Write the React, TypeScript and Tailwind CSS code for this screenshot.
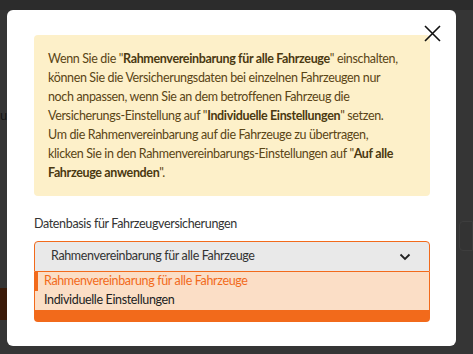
const options = ["Rahmenvereinbarung für alle Fahrzeuge", "Individuelle Einstellungen"];

function CloseIcon() {
  return (
    <svg width="17" height="17" viewBox="0 0 17 17" fill="none">
      <path d="M1 1L16 16M16 1L1 16" stroke="#111" strokeWidth="1.6" />
    </svg>
  );
}

function Chevron() {
  return (
    <svg width="12" height="8" viewBox="0 0 12 8" fill="none">
      <path d="M1.5 1.5L6 6L10.5 1.5" stroke="#222" strokeWidth="1.8" />
    </svg>
  );
}

const B = ({ children }: { children: React.ReactNode }) => (
  <b className="font-bold text-[#4a3810]">{children}</b>
);

export default function App() {
  return (
    <div
      className="relative h-[354px] w-[473px] overflow-hidden bg-[#353535] tracking-[-0.35px]"
      style={{ fontFamily: "Lato, 'Open Sans', sans-serif" }}
    >
      {/* dimmed page behind the dialog */}
      <div className="h-[10px] bg-[#2c2c2c]" />
      <div className="mt-[96px] flex h-[20px] items-center text-[13px] text-[#151515]">
        <span>ue</span>
      </div>
      <div className="mt-[95px] ml-[459px] h-[30px] w-[14px] rounded-l border border-[#3d3d3d] bg-[#333]" />
      <div className="mt-[37px] h-[32px] w-[20px] bg-[#3a1a09]" />

      <div className="absolute left-[7px] top-[10px] h-[336px] w-[449px] rounded-[6px] bg-white px-[27px] pt-[25px]">
        <button className="absolute right-[15px] top-[15px]">
          <CloseIcon />
        </button>

        <div className="w-[396px] whitespace-nowrap rounded-[4px] bg-[#fdf0c9] px-[14px] py-[14px] text-[12.5px] leading-[19px] text-[#5a4516]">
          Wenn Sie die "<B>Rahmenvereinbarung für alle Fahrzeuge</B>" einschalten,
          <br />
          können Sie die Versicherungsdaten bei einzelnen Fahrzeugen nur
          <br />
          noch anpassen, wenn Sie an dem betroffenen Fahrzeug die
          <br />
          Versicherungs-Einstellung auf "<B>Individuelle Einstellungen</B>" setzen.
          <br />
          Um die Rahmenvereinbarung auf die Fahrzeuge zu übertragen,
          <br />
          klicken Sie in den Rahmenvereinbarungs-Einstellungen auf "<B>Auf alle</B>
          <br />
          <B>Fahrzeuge anwenden</B>".
        </div>

        <div className="mt-[18px] text-[12.5px] leading-[19px] text-[#333]">Datenbasis für Fahrzeugversicherungen</div>

        <div className="mt-[8px] w-[396px]">
          <div className="flex h-[31px] items-center justify-between rounded-t-[4px] border border-[#f26a1b] bg-[#e9e9e9] pl-[16px] pr-[18px] text-[12.5px] text-[#333]">
            <span>{options[0]}</span>
            <Chevron />
          </div>
          <div className="rounded-b-[4px] bg-[#f26a1b] pb-[12px]">
            <div className="border-x border-[#f26a1b] bg-[#fbdec6] text-[12.5px]">
              {options.map((o, i) => (
                <div
                  key={o}
                  className={`flex h-[19px] items-center ${
                    i === 0 ? "border-l-[3px] border-[#f26a1b] pl-[6px] text-[#f26a1b]" : "pl-[9px] text-[#222]"
                  }`}
                >
                  {o}
                </div>
              ))}
            </div>
          </div>
        </div>
      </div>
    </div>
  );
}
